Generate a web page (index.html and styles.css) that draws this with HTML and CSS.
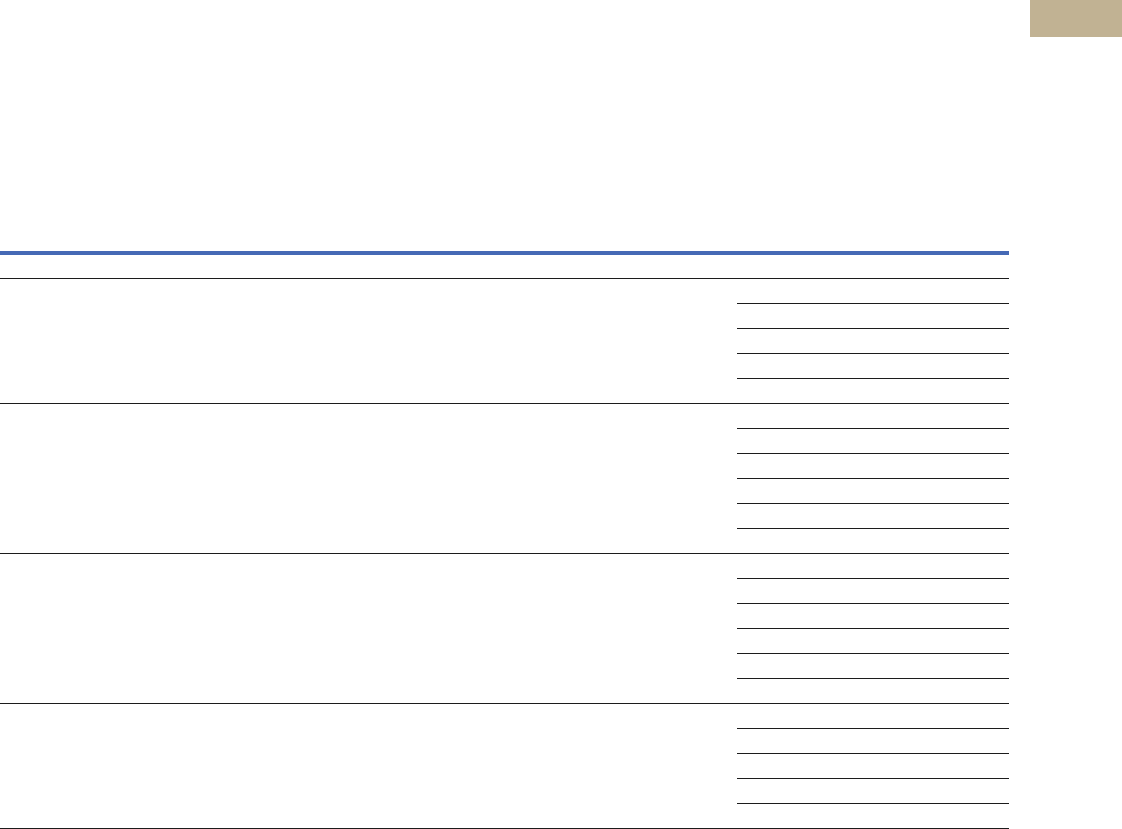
FILE: index.html
```html
<!DOCTYPE html>
<html>
<head>
<meta charset="utf-8">
<link rel="stylesheet" href="styles.css">
</head>
<body>
<div class="page">
  <div class="topbar"><div class="tab"></div></div>
  <div class="sheet">
    <div class="head"></div>
    <div class="group">
      <div class="label"></div>
      <div class="rows"><div class="row"></div><div class="row"></div><div class="row"></div><div class="row"></div><div class="row"></div></div>
    </div>
    <div class="group">
      <div class="label"></div>
      <div class="rows"><div class="row"></div><div class="row"></div><div class="row"></div><div class="row"></div><div class="row"></div><div class="row"></div></div>
    </div>
    <div class="group">
      <div class="label"></div>
      <div class="rows"><div class="row"></div><div class="row"></div><div class="row"></div><div class="row"></div><div class="row"></div><div class="row"></div></div>
    </div>
    <div class="group">
      <div class="label"></div>
      <div class="rows"><div class="row"></div><div class="row"></div><div class="row"></div><div class="row"></div><div class="row"></div></div>
    </div>
  </div>
</div>
</body>
</html>
```

FILE: styles.css
```css
html, body {
  margin: 0;
  padding: 0;
  background: #ffffff;
  font-family: "Liberation Sans", Arial, sans-serif;
}
.page {
  width: 1122px;
  display: flex;
  flex-direction: column;
}
.topbar {
  height: 251px;
  display: flex;
  justify-content: flex-end;
  align-items: flex-start;
}
.tab {
  width: 92px;
  height: 37px;
  background: #c1b293;
}
.sheet {
  width: 1009px;
  display: flex;
  flex-direction: column;
}
.head {
  height: 23px;
  border-top: 4px solid #4569b5;
  border-bottom: 1px solid #1c1c1c;
}
.group {
  display: flex;
  border-bottom: 1px solid #1c1c1c;
}
.label {
  width: 737px;
  flex: none;
}
.rows {
  flex: 1;
  display: flex;
  flex-direction: column;
}
.row {
  height: 24px;
  border-bottom: 1px solid #1c1c1c;
}
.row:last-child {
  border-bottom: none;
}
```
